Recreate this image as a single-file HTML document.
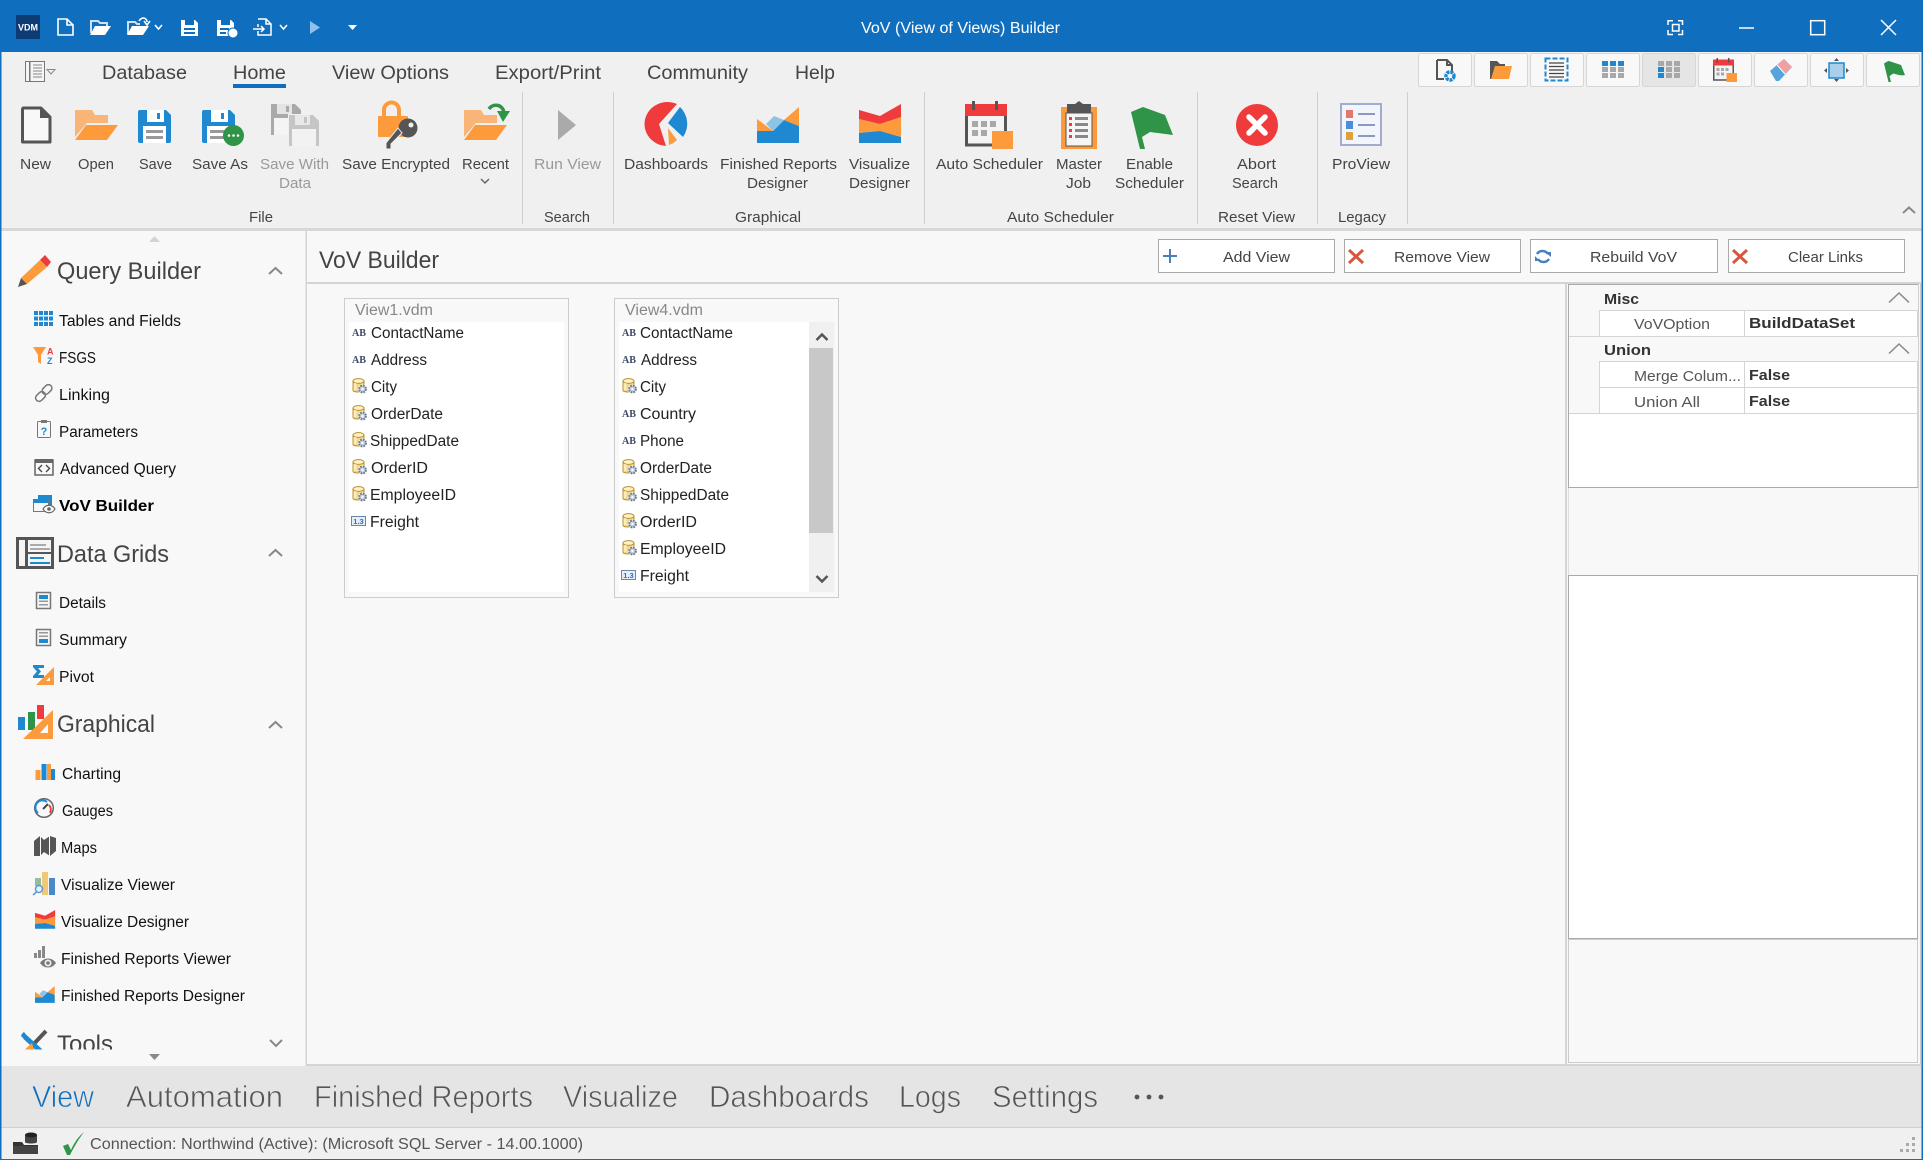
<!DOCTYPE html>
<html lang="en"><head><meta charset="utf-8"><title>VoV (View of Views) Builder</title>
<style>
html,body{margin:0;padding:0;background:#f8f8f8;width:1923px;height:1160px;overflow:hidden}
svg{display:block}
text{font-family:"Liberation Sans",sans-serif}
.r{font-size:15px;fill:#444}
.d{font-size:15px;fill:#999}
.t{font-size:19.5px;fill:#444}
.h{font-size:24px;fill:#444}
.i{font-size:15.5px;fill:#111}
.l{font-size:15.5px;fill:#222}
.n{font-size:31px;fill:#555;stroke:#e5e5e5;stroke-width:.7px}
.b{font-size:15px;fill:#444}
.p{font-size:15px;fill:#555}
.v{font-size:15px;font-weight:bold;fill:#333}
</style></head><body>
<svg xmlns="http://www.w3.org/2000/svg" width="1923" height="1160" viewBox="0 0 1923 1160">
<defs>
<g id="disk"><path d="M2 0H28L33 5V31a2 2 0 0 1-2 2H2a2 2 0 0 1-2-2V2a2 2 0 0 1 2-2z" fill="#1e88d0"/><rect x="9" y="0" width="17" height="12" fill="#fff"/><rect x="19" y="3" width="3" height="6" fill="#1e88d0"/><rect x="5" y="16" width="23" height="17" fill="#fff"/><rect x="8" y="20" width="17" height="3" fill="#999"/><rect x="8" y="26" width="17" height="3" fill="#999"/></g>
<g id="gdisk"><path d="M0 0H24L30 6V31H0z" fill="#a9a9a9"/><rect x="6" y="0" width="15" height="10" fill="#e4e4e4"/><rect x="15" y="2" width="3" height="6" fill="#a9a9a9"/><rect x="3" y="14" width="24" height="17" fill="#f4f4f4"/></g>
<g id="folder"><path d="M0 0H17L20 5H33V13H12L0 27z" fill="#f9b577"/><path d="M11 15H43L32 30H0z" fill="#fd9a3c"/></g>
<g id="fr"><path d="M0 24H16L27 13 42 19V36H0z" fill="#1e88d0"/><path d="M9 17L17 9 27 13 16 24z" fill="#8fc3e6"/><path d="M0 12L16 24H0z" fill="#fd9a3c"/><path d="M42 0V19L27 13z" fill="#fd9a3c"/></g>
<g id="viz"><path d="M0 15L21 20 42 13V33L21 27 0 29z" fill="#fd9a3c"/><path d="M0 6L21 12 42 0V13L21 20 0 15z" fill="#ef3b3b"/><path d="M0 29L21 27 42 33V39H0z" fill="#1e88d0"/></g>
<g id="cal"><rect x="1.5" y="11" width="39" height="33" fill="#f4f4f4" stroke="#555" stroke-width="3"/><rect y="3" width="42" height="12" fill="#ef3b3b"/><rect x="7" width="3" height="9" fill="#555"/><rect x="30" width="3" height="9" fill="#555"/><g fill="#a8a8a8"><rect x="7" y="20" width="6" height="6"/><rect x="16" y="20" width="6" height="6"/><rect x="25" y="20" width="6" height="6"/><rect x="7" y="29" width="6" height="6"/><rect x="16" y="29" width="6" height="6"/></g><rect x="27" y="30" width="21" height="18" fill="#fd9a3c"/></g>
<path id="flag" d="M0 5C4 2 8 0 10 0L34 8 42 28C34 30 26 27 19 25L11 30 14 42H9z" fill="#2f9348"/>
<g id="dbf"><path d="M1 3.5V12.5C1 14.5 12 14.5 12 12.5V3.5z" fill="#f6d77f" stroke="#b8912f" stroke-width="1"/><ellipse cx="6.5" cy="3" rx="5.5" ry="2.4" fill="#fff1c5" stroke="#b8912f"/><rect x="1.5" y="5" width="3" height="7" fill="#fff" opacity=".5"/><circle cx="10.5" cy="11" r="4.6" fill="#fff"/><circle cx="10.5" cy="11" r="3.4" fill="#c8d2de" stroke="#6d7d91" stroke-width="2" stroke-dasharray="1.8 .9"/><circle cx="10.5" cy="11" r="1.1" fill="#fff"/></g>
<g id="num"><rect x=".5" y=".5" width="14" height="9" fill="#e8eef8" stroke="#6b86ad"/><text x="7.5" y="8" font-size="7.5" font-weight="bold" fill="#2a72c2" text-anchor="middle">1.3</text></g>
<g id="chevU"><path d="M0 7L6.5 1 13 7" fill="none" stroke="#888" stroke-width="2"/></g>
<g id="redx"><path d="M1 1L15 14M15 1L1 14" stroke="#d9573f" stroke-width="3" fill="none"/></g>
<clipPath id="tc"><rect x="0" y="1020" width="305" height="29.5"/></clipPath>
</defs>

<rect width="1923" height="1160" fill="#106ebe"/>
<rect x="1.500" y="52" width="1920" height="1107" fill="#f8f8f8"/>
<rect x="1.500" y="52" width="1920" height="176" fill="#f0f0f0"/>
<rect x="1.500" y="228" width="1920" height="3" fill="#d8d8d8"/>

<!-- Title bar -->
<rect x="16" y="15" width="24" height="24" fill="#0d3b73"/>
<text x="18" y="30.5" font-size="9.5" font-weight="bold" fill="#fff" textLength="20" lengthAdjust="spacingAndGlyphs">VDM</text>
<path d="M58 19H67L73 25V35H58z M67 19V25H73" fill="none" stroke="#fff" stroke-width="1.6"/>
<path d="M91 33V21H98L100 23H107V26" fill="none" stroke="#cfe2f3" stroke-width="2"/><path d="M95 26H111L105 35H90z" fill="#fff"/>
<path d="M128 34V22H135L137 24H140" fill="none" stroke="#cfe2f3" stroke-width="2"/><path d="M132 26H149L143 35H127z" fill="#fff"/><path d="M139 21C142 16 147 18 147 22M144 21L147 25 150 21" stroke="#fff" stroke-width="1.6" fill="none"/>
<path d="M155 25L158.500 29 162 25M280 25L283.500 29 287 25" stroke="#fff" stroke-width="1.6" fill="none"/>
<path d="M181 20H195L198 23V36H181z" fill="#fff"/><rect x="185" y="20" width="9" height="5" fill="#106ebe"/><rect x="184" y="28" width="11" height="2" fill="#106ebe"/><rect x="184" y="32" width="11" height="2" fill="#106ebe"/>
<path d="M217 20H231L234 23V36H217z" fill="#fff"/><rect x="221" y="20" width="9" height="5" fill="#106ebe"/><rect x="220" y="28" width="9" height="2" fill="#106ebe"/><rect x="220" y="32" width="6" height="2" fill="#106ebe"/><circle cx="233" cy="33" r="5" fill="#fff" stroke="#106ebe"/>
<path d="M258 19H266L271 24V35H258V31M258 24V27M266 19V24H271M253 29H264M261 26L264 29 261 32" fill="none" stroke="#fff" stroke-width="1.5"/>
<path d="M310 21L320 27.500 310 34z" fill="#8fc1ea"/>
<path d="M348 25H357L352.500 30z" fill="#fff"/>
<text x="861" y="33" font-size="15.500" fill="#fff" textLength="199" lengthAdjust="spacingAndGlyphs">VoV (View of Views) Builder</text>
<g fill="none" stroke="#fff" stroke-width="1.500"><path d="M1668 25V20.700H1673M1678 20.700H1682.500V25M1682.500 30V34.500H1678M1673 34.500H1668V30"/><rect x="1672.500" y="24.500" width="6.500" height="6.500"/><path d="M1739 28H1754"/><rect x="1810.700" y="20.700" width="14" height="14"/><path d="M1881 20L1896 35M1896 20L1881 35"/></g>

<!-- Tabs -->
<rect x="25.500" y="61.500" width="19" height="20" fill="#f5f5f5" stroke="#777"/><rect x="29" y="62" width="1.500" height="19" fill="#777"/><path d="M33 65H42M33 68H42M33 71H42M33 74H42M33 77H42" stroke="#888"/><path d="M47 69.500H55L51 74z" fill="none" stroke="#888"/>
<text class="t" x="102" y="79" textLength="85" lengthAdjust="spacingAndGlyphs">Database</text>
<text class="t" x="233" y="79" textLength="53" lengthAdjust="spacingAndGlyphs">Home</text>
<rect x="233" y="84" width="53" height="4" fill="#106ebe"/>
<text class="t" x="332" y="79" textLength="117" lengthAdjust="spacingAndGlyphs">View Options</text>
<text class="t" x="495" y="79" textLength="106" lengthAdjust="spacingAndGlyphs">Export/Print</text>
<text class="t" x="647" y="79" textLength="101" lengthAdjust="spacingAndGlyphs">Community</text>
<text class="t" x="795" y="79" textLength="40" lengthAdjust="spacingAndGlyphs">Help</text>

<!-- Right toolbar -->
<g fill="#f8f8f8" stroke="#d6d6d6"><rect x="1418.500" y="53.500" width="53" height="33" rx="2"/><rect x="1474.500" y="53.500" width="53" height="33" rx="2"/><rect x="1530.500" y="53.500" width="53" height="33" rx="2"/><rect x="1586.500" y="53.500" width="53" height="33" rx="2"/><rect x="1642.500" y="53.500" width="53" height="33" rx="2" fill="#e5e5e5"/><rect x="1698.500" y="53.500" width="53" height="33" rx="2"/><rect x="1754.500" y="53.500" width="53" height="33" rx="2"/><rect x="1810.500" y="53.500" width="53" height="33" rx="2"/><rect x="1866.500" y="53.500" width="53" height="33" rx="2"/></g>
<path d="M1437 60H1447L1452 65V72M1447 60V65H1452M1437 60V79H1444" fill="none" stroke="#555" stroke-width="2"/><circle cx="1450" cy="76" r="4" fill="#fff" stroke="#1e88d0" stroke-width="3.500" stroke-dasharray="3 .8"/>
<path d="M1490 61H1497L1500 64H1505V68H1496L1493 79H1490z" fill="#555"/><path d="M1495 66H1512L1509 79H1491z" fill="#fd9a3c"/>
<rect x="1545.500" y="58.500" width="22" height="22" fill="none" stroke="#1e88d0" stroke-width="2" stroke-dasharray="5 2"/><path d="M1549 63H1564M1549 66.500H1564M1549 70H1564M1549 73.500H1564M1549 77H1564" stroke="#444" stroke-width="1.300"/>
<g fill="#a8a8a8"><rect x="1602" y="61" width="6" height="5" fill="#1e88d0"/><rect x="1610" y="61" width="6" height="5" fill="#1e88d0"/><rect x="1618" y="61" width="6" height="5" fill="#1e88d0"/><rect x="1602" y="67" width="6" height="5"/><rect x="1610" y="67" width="6" height="5"/><rect x="1618" y="67" width="6" height="5"/><rect x="1602" y="73" width="6" height="5"/><rect x="1610" y="73" width="6" height="5"/><rect x="1618" y="73" width="6" height="5"/></g>
<g fill="#a8a8a8"><rect x="1658" y="61" width="6" height="5"/><rect x="1666" y="61" width="6" height="5"/><rect x="1674" y="61" width="6" height="5"/><rect x="1658" y="67" width="6" height="5" fill="#1e88d0"/><rect x="1666" y="67" width="6" height="5"/><rect x="1674" y="67" width="6" height="5"/><rect x="1658" y="73" width="6" height="5" fill="#1e88d0"/><rect x="1666" y="73" width="6" height="5"/><rect x="1674" y="73" width="6" height="5"/></g>
<use href="#cal" transform="translate(1713,58) scale(.5)"/>
<path d="M1770 71L1784 59 1792 67 1779 81 1776 81z" fill="#55a5dc"/><path d="M1777 65L1784 59 1792 67 1785 74z" fill="#f0a0a0"/><path d="M1777 65L1785 74" stroke="#fff"/>
<rect x="1829" y="63" width="15" height="15" fill="#a9cfeb" stroke="#1e88d0" stroke-width="1.500"/><path d="M1836.500 58L1834 61H1839zM1836.500 82L1834 79H1839zM1824 70.500L1827 68V73zM1849 70.500L1846 68V73z" fill="#555"/>
<use href="#flag" transform="translate(1884,61) scale(.5)"/>
<path d="M1903 213L1909 207.500 1915 213" fill="none" stroke="#888" stroke-width="2"/>

<!-- Ribbon separators -->
<g fill="#cfcfcf"><rect x="522" y="92" width="1" height="132"/><rect x="613" y="92" width="1" height="132"/><rect x="924" y="92" width="1" height="132"/><rect x="1197" y="92" width="1" height="132"/><rect x="1317" y="92" width="1" height="132"/><rect x="1407" y="92" width="1" height="132"/></g>

<!-- Ribbon icons -->
<path d="M23 108H41L50 117V142H22.500V109z" fill="#f8f8f8" stroke="#555" stroke-width="3" stroke-linejoin="round"/><path d="M41 108V117H50" fill="#555" stroke="#555" stroke-width="2"/>
<use href="#folder" transform="translate(75,110)"/>
<use href="#disk" transform="translate(138,110)"/>
<use href="#disk" transform="translate(202,110)"/><circle cx="233.500" cy="135.500" r="10.500" fill="#2f9348"/><g fill="#fff"><circle cx="229" cy="135.500" r="1.300"/><circle cx="233.500" cy="135.500" r="1.300"/><circle cx="238" cy="135.500" r="1.300"/></g>
<use href="#gdisk" transform="translate(271,104)"/><rect x="288" y="114" width="32" height="33" fill="#f0f0f0"/><g opacity=".6"><use href="#gdisk" transform="translate(289,115)"/></g>
<path d="M384 118V110a7.500 7.500 0 0 1 15 0V118" fill="none" stroke="#fd9a3c" stroke-width="4"/><rect x="378" y="116" width="30" height="21" rx="1" fill="#fd9a3c"/>
<circle cx="408" cy="128" r="9.500" fill="#555"/><circle cx="411" cy="125" r="2.500" fill="#f0f0f0"/><path d="M402 133L391 144V149H386V143L398 128z" fill="#555" stroke="#f0f0f0"/>
<use href="#folder" transform="translate(464,110)"/><path d="M489 109C493 103 503 104 504 113" fill="none" stroke="#2f9348" stroke-width="3.500"/><path d="M497 111H510L503 122z" fill="#2f9348"/>
<path d="M481 179L485 183 489 179" fill="none" stroke="#666" stroke-width="1.500"/>
<path d="M558 110L576 125 558 140z" fill="#aaa"/>
<path d="M677 104A23 22 0 1 0 666 146L659 124z" fill="#ef3b3b"/><path d="M680 107A23 23 0 0 1 683 137L668 123z" fill="#1e88d0"/><path d="M668 128L677 140A23 22 0 0 1 669 145z" fill="#fd9a3c"/>
<use href="#fr" transform="translate(757,107)"/>
<use href="#viz" transform="translate(859,104)"/>
<use href="#cal" transform="translate(965,101)"/>
<rect x="1061" y="107" width="36" height="42" fill="#fd9a3c"/><path d="M1067 104H1075L1079 101 1083 104H1091V113H1067z" fill="#555"/><rect x="1066" y="113" width="26" height="33" fill="#f5f5f5" stroke="#555"/><g fill="#ef3b3b"><rect x="1069" y="117" width="3" height="3"/><rect x="1069" y="123" width="3" height="3"/><rect x="1069" y="129" width="3" height="3"/><rect x="1069" y="135" width="3" height="3"/></g><g fill="#888"><rect x="1075" y="117" width="13" height="3"/><rect x="1075" y="123" width="13" height="3"/><rect x="1075" y="129" width="13" height="3"/><rect x="1075" y="135" width="13" height="3"/></g>
<path d="M1131 112L1143 107 1165 115 1173 135 1150 132 1142 137 1145 149H1140z" fill="#2f9348"/>
<circle cx="1257" cy="125" r="21" fill="#ef3b3b"/><path d="M1249 117L1265 133M1265 117L1249 133" stroke="#fff" stroke-width="5.500" stroke-linecap="round"/>
<rect x="1341" y="104" width="40" height="41" fill="#f2f5fc" stroke="#a0acd0" stroke-width="2"/><rect x="1346" y="110" width="7" height="8" fill="#e2786a"/><rect x="1346" y="121" width="7" height="8" fill="#4a90d9"/><rect x="1346" y="132" width="7" height="8" fill="#e0a040"/><g fill="#8c98bd"><rect x="1358" y="113" width="17" height="2"/><rect x="1358" y="124" width="17" height="2"/><rect x="1358" y="135" width="17" height="2"/></g>

<!-- Ribbon labels -->
<text class="r" x="20" y="169" textLength="31" lengthAdjust="spacingAndGlyphs">New</text>
<text class="r" x="78" y="169" textLength="36" lengthAdjust="spacingAndGlyphs">Open</text>
<text class="r" x="139" y="169" textLength="33" lengthAdjust="spacingAndGlyphs">Save</text>
<text class="r" x="192" y="169" textLength="56" lengthAdjust="spacingAndGlyphs">Save As</text>
<text class="d" x="260" y="169" textLength="69" lengthAdjust="spacingAndGlyphs">Save With</text>
<text class="d" x="279" y="188" textLength="32" lengthAdjust="spacingAndGlyphs">Data</text>
<text class="r" x="342" y="169" textLength="108" lengthAdjust="spacingAndGlyphs">Save Encrypted</text>
<text class="r" x="462" y="169" textLength="47" lengthAdjust="spacingAndGlyphs">Recent</text>
<text class="d" x="534" y="169" textLength="67" lengthAdjust="spacingAndGlyphs">Run View</text>
<text class="r" x="624" y="169" textLength="84" lengthAdjust="spacingAndGlyphs">Dashboards</text>
<text class="r" x="720" y="169" textLength="117" lengthAdjust="spacingAndGlyphs">Finished Reports</text>
<text class="r" x="747" y="188" textLength="61" lengthAdjust="spacingAndGlyphs">Designer</text>
<text class="r" x="849" y="169" textLength="61" lengthAdjust="spacingAndGlyphs">Visualize</text>
<text class="r" x="849" y="188" textLength="61" lengthAdjust="spacingAndGlyphs">Designer</text>
<text class="r" x="936" y="169" textLength="107" lengthAdjust="spacingAndGlyphs">Auto Scheduler</text>
<text class="r" x="1056" y="169" textLength="46" lengthAdjust="spacingAndGlyphs">Master</text>
<text class="r" x="1066" y="188" textLength="25" lengthAdjust="spacingAndGlyphs">Job</text>
<text class="r" x="1126" y="169" textLength="47" lengthAdjust="spacingAndGlyphs">Enable</text>
<text class="r" x="1115" y="188" textLength="69" lengthAdjust="spacingAndGlyphs">Scheduler</text>
<text class="r" x="1237" y="169" textLength="39" lengthAdjust="spacingAndGlyphs">Abort</text>
<text class="r" x="1232" y="188" textLength="46" lengthAdjust="spacingAndGlyphs">Search</text>
<text class="r" x="1332" y="169" textLength="58" lengthAdjust="spacingAndGlyphs">ProView</text>
<text class="r" x="249" y="222" textLength="24" lengthAdjust="spacingAndGlyphs">File</text>
<text class="r" x="544" y="222" textLength="46" lengthAdjust="spacingAndGlyphs">Search</text>
<text class="r" x="735" y="222" textLength="66" lengthAdjust="spacingAndGlyphs">Graphical</text>
<text class="r" x="1007" y="222" textLength="107" lengthAdjust="spacingAndGlyphs">Auto Scheduler</text>
<text class="r" x="1218" y="222" textLength="77" lengthAdjust="spacingAndGlyphs">Reset View</text>
<text class="r" x="1338" y="222" textLength="48" lengthAdjust="spacingAndGlyphs">Legacy</text>

<!-- Sidebar -->
<rect x="305.500" y="231" width="1.500" height="835" fill="#d4d4d4"/>
<path d="M149 242L154.500 236 160 242z" fill="#d4d4d4"/>
<path d="M45 255L51 262 47 267 40 260z" fill="#ef3b3b"/><path d="M40 260L47 267 27 284 21 278z" fill="#fd9a3c"/><path d="M21 278L27 284 18 287z" fill="#555"/>
<text class="h" x="57" y="279" textLength="144" lengthAdjust="spacingAndGlyphs">Query Builder</text>
<use href="#chevU" transform="translate(269,267)"/>
<g fill="#1e88d0"><rect x="34" y="311" width="4" height="4"/><rect x="39" y="311" width="4" height="4"/><rect x="44" y="311" width="4" height="4"/><rect x="49" y="311" width="4" height="4"/><rect x="34" y="316.500" width="4" height="4"/><rect x="39" y="316.500" width="4" height="4"/><rect x="44" y="316.500" width="4" height="4"/><rect x="49" y="316.500" width="4" height="4"/><rect x="34" y="322" width="4" height="4"/><rect x="39" y="322" width="4" height="4"/><rect x="44" y="322" width="4" height="4"/><rect x="49" y="322" width="4" height="4"/></g>
<text class="i" x="59" y="326" textLength="122" lengthAdjust="spacingAndGlyphs">Tables and Fields</text>
<path d="M33 347H46L41 355V364L38 362V355z" fill="#fd9a3c"/><text x="47" y="354.500" font-size="9" font-weight="bold" fill="#ef3b3b">A</text><text x="47" y="364" font-size="9" font-weight="bold" fill="#1e88d0">Z</text>
<text class="i" x="59" y="363" textLength="37" lengthAdjust="spacingAndGlyphs">FSGS</text>
<g fill="none" stroke="#777" stroke-width="1.500"><rect x="35" y="393" width="11" height="7" rx="3.500" transform="rotate(-45 40.500 396.500)"/><rect x="41.500" y="386" width="11" height="7" rx="3.500" transform="rotate(-45 47 389.500)"/></g>
<text class="i" x="59" y="400" textLength="51" lengthAdjust="spacingAndGlyphs">Linking</text>
<rect x="37.500" y="421.500" width="13" height="16" rx="1" fill="#f8f8f8" stroke="#777"/><rect x="41" y="420" width="6" height="3" fill="#777"/><text x="44" y="435" font-size="11" font-weight="bold" fill="#1e88d0" text-anchor="middle">?</text>
<text class="i" x="59" y="437" textLength="79" lengthAdjust="spacingAndGlyphs">Parameters</text>
<rect x="35" y="460" width="18" height="15" fill="#f8f8f8" stroke="#666" stroke-width="1.500"/><rect x="35" y="459" width="18" height="4" fill="#666"/><path d="M42 465L38.500 468.500 42 472M46 465L49.500 468.500 46 472" fill="none" stroke="#444" stroke-width="1.300"/>
<text class="i" x="60" y="474" textLength="116" lengthAdjust="spacingAndGlyphs">Advanced Query</text>
<rect x="38" y="495" width="14" height="10" fill="#1e88d0"/><rect x="33.500" y="499.500" width="15" height="12" fill="#f8f8f8" stroke="#777"/><rect x="33" y="499" width="15" height="4" fill="#1e88d0"/><path d="M43 509C46 504 52 504 55 509 52 514 46 514 43 509z" fill="#f8f8f8" stroke="#666" stroke-width="1.200"/><circle cx="49" cy="509" r="1.800" fill="#666"/>
<text class="i" x="59" y="511" font-weight="bold" style="fill:#000" textLength="95" lengthAdjust="spacingAndGlyphs">VoV Builder</text>

<rect x="17.500" y="538.500" width="35" height="29" fill="#f5f5f5" stroke="#555" stroke-width="3"/><rect x="25" y="538" width="3" height="30" fill="#555"/><rect x="28" y="552" width="24" height="2" fill="#555"/><rect x="30" y="544" width="16" height="2" fill="#aaa"/><rect x="30" y="548" width="20" height="2" fill="#aaa"/><rect x="30" y="557" width="14" height="2" fill="#1e88d0"/><rect x="30" y="562" width="20" height="2" fill="#1e88d0"/>
<text class="h" x="57" y="562" textLength="112" lengthAdjust="spacingAndGlyphs">Data Grids</text>
<use href="#chevU" transform="translate(269,549)"/>
<rect x="36.500" y="592.500" width="14" height="16" fill="#f5f5f5" stroke="#777" stroke-width="1.500"/><rect x="39" y="595" width="9" height="4" fill="#1e88d0"/><rect x="39" y="600.500" width="9" height="1.500" fill="#999"/><rect x="39" y="604" width="9" height="1.500" fill="#999"/>
<text class="i" x="59" y="608" textLength="47" lengthAdjust="spacingAndGlyphs">Details</text>
<rect x="36.500" y="629.500" width="14" height="16" fill="#f5f5f5" stroke="#777" stroke-width="1.500"/><rect x="39" y="632" width="9" height="1.500" fill="#999"/><rect x="39" y="635.500" width="9" height="1.500" fill="#999"/><rect x="39" y="639" width="9" height="4" fill="#1e88d0"/>
<text class="i" x="59" y="645" textLength="68" lengthAdjust="spacingAndGlyphs">Summary</text>
<path d="M33 665H44V668H38L41 671.500 38 675H44V678H33V676L37 671.500 33 667z" fill="#1e88d0"/><path d="M54 667V685H36z" fill="#fd9a3c"/><path d="M50 677V681H46z" fill="#f8f8f8"/>
<text class="i" x="59" y="682" textLength="35" lengthAdjust="spacingAndGlyphs">Pivot</text>

<rect x="18" y="717" width="7" height="13" fill="#1e88d0"/><rect x="28" y="712" width="7" height="18" fill="#2f9348"/><rect x="37" y="705" width="7" height="14" fill="#ef3b3b"/><path d="M53 710V739H23z" fill="#fd9a3c"/><path d="M48 724V733H40z" fill="#f8f8f8"/>
<text class="h" x="57" y="732" textLength="98" lengthAdjust="spacingAndGlyphs">Graphical</text>
<use href="#chevU" transform="translate(269,721)"/>
<rect x="35.500" y="770" width="5" height="10" fill="#fd9a3c"/><rect x="41.500" y="764" width="5" height="16" fill="#1e88d0"/><rect x="47" y="764" width="4" height="16" fill="#fd9a3c"/><rect x="51" y="769" width="4" height="11" fill="#1e88d0"/>
<text class="i" x="62" y="779" textLength="59" lengthAdjust="spacingAndGlyphs">Charting</text>
<circle cx="44" cy="808" r="9.300" fill="#f8f8f8" stroke="#666" stroke-width="1.500"/><path d="M38 813A7 7 0 0 1 47 802" fill="none" stroke="#1e88d0" stroke-width="2"/><path d="M49 805A7 7 0 0 1 50 813" fill="none" stroke="#ef3b3b" stroke-width="2"/><path d="M43 809L48 804" stroke="#444" stroke-width="2"/>
<text class="i" x="62" y="816" textLength="51" lengthAdjust="spacingAndGlyphs">Gauges</text>
<path d="M34 841L40 836 44 840 50 836 56 838V851L50 856 44 852 40 856 34 856z" fill="#555"/><path d="M40.500 836V856M49.500 836V856" stroke="#f8f8f8"/>
<text class="i" x="61" y="853" textLength="36" lengthAdjust="spacingAndGlyphs">Maps</text>
<rect x="35" y="878" width="6" height="8" fill="#8ec0a0"/><rect x="42" y="872" width="6" height="23" fill="#f0c878"/><rect x="49" y="878" width="6" height="17" fill="#4a88c8"/><circle cx="39" cy="889" r="3.500" fill="#e8f0fa" stroke="#5a9ad8" stroke-width="1.500"/><path d="M36.500 892L33 895" stroke="#5a9ad8" stroke-width="1.500"/>
<text class="i" x="61" y="890" textLength="114" lengthAdjust="spacingAndGlyphs">Visualize Viewer</text>
<use href="#viz" transform="translate(35,910) scale(.48)"/>
<text class="i" x="61" y="927" textLength="128" lengthAdjust="spacingAndGlyphs">Visualize Designer</text>
<g fill="#888"><rect x="34" y="953" width="3" height="5"/><rect x="38" y="950" width="3" height="8"/><rect x="42" y="946" width="3" height="12"/></g><path d="M40 963C44 957 52 957 56 963 52 969 44 969 40 963z" fill="#777"/><circle cx="48" cy="963" r="3.500" fill="#f0f0f0"/><circle cx="48" cy="963" r="1.800" fill="#777"/>
<use href="#fr" transform="translate(35,986) scale(.47)"/>
<text class="i" x="61" y="964" textLength="170" lengthAdjust="spacingAndGlyphs">Finished Reports Viewer</text>
<text class="i" x="61" y="1001" textLength="184" lengthAdjust="spacingAndGlyphs">Finished Reports Designer</text>
<g clip-path="url(#tc)"><path d="M46 1031L30 1048" stroke="#555" stroke-width="4"/><path d="M21 1036L25 1040 28 1037 24 1032A7 7 0 0 0 21 1036z" fill="#1e88d0"/><path d="M25 1037L46 1056" stroke="#1e88d0" stroke-width="5" fill="none"/><path d="M22 1052L32 1043 36 1056H22z" fill="#fd9a3c"/><text class="h" x="57" y="1052" textLength="56" lengthAdjust="spacingAndGlyphs">Tools</text></g>
<path d="M270 1040L276 1046 282 1040" fill="none" stroke="#888" stroke-width="2"/>
<path d="M149 1054H160L154.500 1060z" fill="#888"/>

<!-- Content header -->
<text class="h" x="319" y="268" textLength="120" lengthAdjust="spacingAndGlyphs">VoV Builder</text>
<rect x="307" y="282" width="1614" height="2" fill="#d4d4d4"/>
<g fill="#fff" stroke="#aaa"><rect x="1158.500" y="239.500" width="176" height="33"/><rect x="1344.500" y="239.500" width="176" height="33"/><rect x="1530.500" y="239.500" width="187" height="33"/><rect x="1728.500" y="239.500" width="176" height="33"/></g>
<path d="M1170 249V263M1163 256H1177" stroke="#4a80b8" stroke-width="2"/>
<use href="#redx" transform="translate(1348,249)"/>
<use href="#redx" transform="translate(1732,249)"/>
<path d="M1537 254A6.500 6.500 0 0 1 1548 254M1549 259A6.500 6.500 0 0 1 1538 259" fill="none" stroke="#4a80b8" stroke-width="2.500"/><path d="M1545 252H1551V257zM1540 261H1535V256z" fill="#4a80b8"/>
<text class="b" x="1223" y="262" textLength="67" lengthAdjust="spacingAndGlyphs">Add View</text>
<text class="b" x="1394" y="262" textLength="96" lengthAdjust="spacingAndGlyphs">Remove View</text>
<text class="b" x="1590" y="262" textLength="87" lengthAdjust="spacingAndGlyphs">Rebuild VoV</text>
<text class="b" x="1788" y="262" textLength="75" lengthAdjust="spacingAndGlyphs">Clear Links</text>

<!-- View boxes -->
<rect x="344.500" y="298.500" width="224" height="299" fill="#f8f8f8" stroke="#ccc"/>
<rect x="349" y="322" width="215" height="270" fill="#fff"/>
<rect x="614.500" y="298.500" width="224" height="299" fill="#f8f8f8" stroke="#ccc"/>
<rect x="619" y="322" width="190" height="270" fill="#fff"/>
<rect x="809" y="322" width="25" height="270" fill="#f0f0f0"/><rect x="809" y="348" width="24" height="185" fill="#c8c8c8"/>
<path d="M816.500 340L822 334.500 827.500 340M816.500 576L822 581.500 827.500 576" fill="none" stroke="#555" stroke-width="2.500"/>
<text x="355" y="315" font-size="15.500" fill="#888" textLength="78" lengthAdjust="spacingAndGlyphs">View1.vdm</text>
<text x="625" y="315" font-size="15.500" fill="#888" textLength="78" lengthAdjust="spacingAndGlyphs">View4.vdm</text>

<g font-size="11" font-weight="bold" fill="#3c4a66">
<text x="352" y="336" style="font-family:'Liberation Serif',serif" textLength="14" lengthAdjust="spacingAndGlyphs">AB</text>
<text x="352" y="363" style="font-family:'Liberation Serif',serif" textLength="14" lengthAdjust="spacingAndGlyphs">AB</text>
<text x="622" y="336" style="font-family:'Liberation Serif',serif" textLength="14" lengthAdjust="spacingAndGlyphs">AB</text>
<text x="622" y="363" style="font-family:'Liberation Serif',serif" textLength="14" lengthAdjust="spacingAndGlyphs">AB</text>
<text x="622" y="417" style="font-family:'Liberation Serif',serif" textLength="14" lengthAdjust="spacingAndGlyphs">AB</text>
<text x="622" y="444" style="font-family:'Liberation Serif',serif" textLength="14" lengthAdjust="spacingAndGlyphs">AB</text>
</g>
<use href="#dbf" x="352" y="378"/><use href="#dbf" x="352" y="405"/><use href="#dbf" x="352" y="432"/><use href="#dbf" x="352" y="459"/><use href="#dbf" x="352" y="486"/>
<use href="#num" x="351" y="516"/>
<use href="#dbf" x="622" y="378"/><use href="#dbf" x="622" y="459"/><use href="#dbf" x="622" y="486"/><use href="#dbf" x="622" y="513"/><use href="#dbf" x="622" y="540"/>
<use href="#num" x="621" y="570"/>

<text class="l" x="371" y="338" textLength="93" lengthAdjust="spacingAndGlyphs">ContactName</text>
<text class="l" x="371" y="365" textLength="56" lengthAdjust="spacingAndGlyphs">Address</text>
<text class="l" x="371" y="392" textLength="26" lengthAdjust="spacingAndGlyphs">City</text>
<text class="l" x="371" y="419" textLength="72" lengthAdjust="spacingAndGlyphs">OrderDate</text>
<text class="l" x="370" y="446" textLength="89" lengthAdjust="spacingAndGlyphs">ShippedDate</text>
<text class="l" x="371" y="473" textLength="57" lengthAdjust="spacingAndGlyphs">OrderID</text>
<text class="l" x="370" y="500" textLength="86" lengthAdjust="spacingAndGlyphs">EmployeeID</text>
<text class="l" x="370" y="527" textLength="49" lengthAdjust="spacingAndGlyphs">Freight</text>

<text class="l" x="640" y="338" textLength="93" lengthAdjust="spacingAndGlyphs">ContactName</text>
<text class="l" x="641" y="365" textLength="56" lengthAdjust="spacingAndGlyphs">Address</text>
<text class="l" x="640" y="392" textLength="26" lengthAdjust="spacingAndGlyphs">City</text>
<text class="l" x="640" y="419" textLength="56" lengthAdjust="spacingAndGlyphs">Country</text>
<text class="l" x="640" y="446" textLength="44" lengthAdjust="spacingAndGlyphs">Phone</text>
<text class="l" x="640" y="473" textLength="72" lengthAdjust="spacingAndGlyphs">OrderDate</text>
<text class="l" x="640" y="500" textLength="89" lengthAdjust="spacingAndGlyphs">ShippedDate</text>
<text class="l" x="640" y="527" textLength="57" lengthAdjust="spacingAndGlyphs">OrderID</text>
<text class="l" x="640" y="554" textLength="86" lengthAdjust="spacingAndGlyphs">EmployeeID</text>
<text class="l" x="640" y="581" textLength="49" lengthAdjust="spacingAndGlyphs">Freight</text>

<!-- Right property panel -->
<rect x="1565" y="284" width="2" height="782" fill="#d4d4d4"/>
<rect x="1568.500" y="284.500" width="349.500" height="203" fill="#fff" stroke="#aaa"/>
<rect x="1569" y="285" width="349" height="25" fill="#f8f8f8"/>
<rect x="1569" y="336" width="349" height="25" fill="#f8f8f8"/>
<rect x="1569" y="310" width="30" height="103" fill="#f8f8f8"/>
<g fill="#d4d4d4"><rect x="1599" y="310" width="319" height="1"/><rect x="1569" y="336" width="349" height="1"/><rect x="1599" y="361" width="319" height="1"/><rect x="1599" y="387" width="319" height="1"/><rect x="1569" y="413" width="349" height="1"/><rect x="1599" y="310" width="1" height="26"/><rect x="1744" y="310" width="1" height="26"/><rect x="1599" y="361" width="1" height="52"/><rect x="1744" y="361" width="1" height="52"/></g>
<path d="M1889 302.500L1899 293 1909 302.500M1889 353.500L1899 344 1909 353.500" fill="none" stroke="#888" stroke-width="1.500"/>
<text class="v" x="1604" y="304" textLength="35" lengthAdjust="spacingAndGlyphs">Misc</text>
<text class="v" x="1604" y="355" textLength="47" lengthAdjust="spacingAndGlyphs">Union</text>
<text class="p" x="1634" y="329" textLength="76" lengthAdjust="spacingAndGlyphs">VoVOption</text>
<text class="v" x="1749" y="328" textLength="106" lengthAdjust="spacingAndGlyphs">BuildDataSet</text>
<text class="p" x="1634" y="381" textLength="107" lengthAdjust="spacingAndGlyphs">Merge Colum...</text>
<text class="v" x="1749" y="380" textLength="41" lengthAdjust="spacingAndGlyphs">False</text>
<text class="p" x="1634" y="407" textLength="66" lengthAdjust="spacingAndGlyphs">Union All</text>
<text class="v" x="1749" y="406" textLength="41" lengthAdjust="spacingAndGlyphs">False</text>
<rect x="1568.500" y="575.500" width="349" height="363" fill="#fff" stroke="#aaa"/>
<rect x="1568.500" y="939.500" width="349" height="123" fill="#f8f8f8" stroke="#ccc"/>
<rect x="1920" y="284" width="1" height="782" fill="#ccc"/>
<rect x="1568" y="488" width="1" height="87" fill="#ddd"/><rect x="1918" y="488" width="1" height="87" fill="#ddd"/>
<rect x="307" y="1064" width="1614" height="2" fill="#d4d4d4"/>

<!-- Bottom nav -->
<rect x="1.500" y="1066" width="1920" height="61" fill="#e5e5e5"/>
<rect x="1.500" y="1127" width="1920" height="1" fill="#d0d0d0"/>
<rect x="1.500" y="1128" width="1920" height="31" fill="#f0f0f0"/>
<text class="n" style="fill:#106ebe" x="32" y="1107" textLength="62" lengthAdjust="spacingAndGlyphs">View</text>
<text class="n" x="126" y="1107" textLength="157" lengthAdjust="spacingAndGlyphs">Automation</text>
<text class="n" x="314" y="1107" textLength="219" lengthAdjust="spacingAndGlyphs">Finished Reports</text>
<text class="n" x="563" y="1107" textLength="115" lengthAdjust="spacingAndGlyphs">Visualize</text>
<text class="n" x="709" y="1107" textLength="160" lengthAdjust="spacingAndGlyphs">Dashboards</text>
<text class="n" x="899" y="1107" textLength="62" lengthAdjust="spacingAndGlyphs">Logs</text>
<text class="n" x="992" y="1107" textLength="106" lengthAdjust="spacingAndGlyphs">Settings</text>
<g fill="#555"><circle cx="1137" cy="1097" r="2.400"/><circle cx="1149" cy="1097" r="2.400"/><circle cx="1161" cy="1097" r="2.400"/></g>

<!-- Status -->
<path d="M13 1142H22L24 1145H38V1154H13z" fill="#333"/><path d="M13 1146H38V1154H13z" fill="#444"/><path d="M25 1135V1142C25 1144 37 1144 37 1142V1135z" fill="#444"/><ellipse cx="31" cy="1135" rx="6" ry="2.500" fill="#222"/>
<path d="M63 1146L68 1144 71 1150C74 1143 78 1137 84 1132 78 1140 74 1147 70 1155H67z" fill="#2f9348"/>
<text x="90" y="1149" font-size="15.500" fill="#555" textLength="493" lengthAdjust="spacingAndGlyphs">Connection: Northwind (Active): (Microsoft SQL Server - 14.00.1000)</text>
<g fill="#aaa"><rect x="1912" y="1137" width="3" height="3"/><rect x="1906" y="1143" width="3" height="3"/><rect x="1912" y="1143" width="3" height="3"/><rect x="1900" y="1149" width="3" height="3"/><rect x="1906" y="1149" width="3" height="3"/><rect x="1912" y="1149" width="3" height="3"/></g>
</svg>
</body></html>
